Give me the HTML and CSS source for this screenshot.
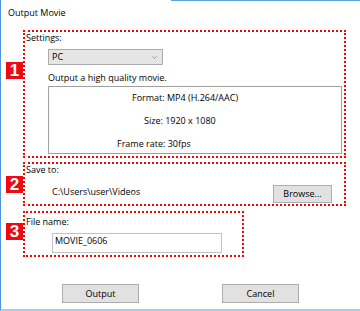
FILE: index.html
```html
<!DOCTYPE html>
<html lang="en">
<head>
    <meta charset="UTF-8">
    <meta name="viewport" content="width=device-width, initial-scale=1.0">
    <title>Output Movie</title>
    <link rel="stylesheet" href="styles.css">
</head>
<body>
    <div class="window">
        <div class="title">Output Movie</div>

        <!-- 1: settings -->
        <div class="group group-settings">
            <span class="badge">1</span>
            <div class="label">Settings:</div>
            <div class="combo">
                <span>PC</span>
                <svg class="chevron" width="5" height="3" viewBox="0 0 5 3"><path d="M0.5 0.5 L2.5 2.5 L4.5 0.5" fill="none" stroke="#8a8a8a" stroke-width="0.9"/></svg>
            </div>
            <div class="desc">Output a high quality movie.</div>
            <div class="info">
                <div class="info-line line-format">Format: MP4 (H.264/AAC)</div>
                <div class="info-line line-size">Size: 1920 x 1080</div>
                <div class="info-line line-rate">Frame rate: 30fps</div>
            </div>
        </div>

        <!-- 2: save location -->
        <div class="group group-save">
            <span class="badge">2</span>
            <div class="label">Save to:</div>
            <div class="save-row">
                <span class="path">C:\Users\user\Videos</span>
                <button class="btn btn-browse">Browse...</button>
            </div>
        </div>

        <!-- 3: file name -->
        <div class="group group-name">
            <span class="badge">3</span>
            <div class="label">File name:</div>
            <div class="textbox">MOVIE_0606</div>
        </div>

        <div class="actions">
            <button class="btn btn-action">Output</button>
            <button class="btn btn-action">Cancel</button>
        </div>
    </div>
</body>
</html>
```

FILE: styles.css
```css
* {
    box-sizing: border-box;
}

body {
    margin: 0;
    background-color: #fff;
    font-family: "Open Sans", "Noto Sans", sans-serif;
    font-size: 9px;
    line-height: 12px;
    color: #000;
}

.window {
    position: relative;
    width: 360px;
    height: 311px;
    border-left: 1px solid #4c95dc;
    border-bottom: 2px solid #a8c9e8;
    overflow: hidden;
}

.window::before {
    content: "";
    position: absolute;
    top: 0;
    left: 170px;
    right: 0;
    height: 1px;
    background-color: #5aa2e2;
}

.title {
    padding: 7px 0 0 7px;
}

.group {
    position: relative;
    margin: 11px 0 0 22px;
    border: 2px dotted #ff0000;
}

.group-settings {
    width: 323px;
    height: 128px;
}

.group-save {
    width: 323px;
    height: 44px;
    margin-top: 4px;
}

.group-name {
    width: 221px;
    height: 46px;
    margin-top: 5px;
}

.badge {
    position: absolute;
    left: -19px;
    width: 17px;
    height: 17px;
    background-color: #ee0a14;
    color: #fff;
    font-family: "Liberation Sans", Arial, sans-serif;
    font-weight: bold;
    font-size: 17px;
    line-height: 17px;
    text-align: center;
}

.group-settings .badge { top: 30px; }
.group-save .badge { top: 12px; }
.group-name .badge { top: 10px; }

.label {
    padding-left: 1px;
}

.group-name .label {
    margin-top: 3px;
}

.combo {
    display: flex;
    align-items: center;
    justify-content: space-between;
    width: 115px;
    height: 16px;
    margin: 5px 0 0 23px;
    padding: 0 5px 0 3px;
    background-color: #e5e5e5;
    border: 1px solid #acacac;
}

.desc {
    margin: 7px 0 0 23px;
}

.info {
    width: 294px;
    height: 68px;
    margin: 2px 0 0 23px;
    padding-top: 5px;
    border: 1px solid #a0a0a0;
    background-color: #fff;
}

.info-line {
    margin-bottom: 11px;
}

.line-format { padding-left: 83px; }
.line-size { padding-left: 95px; }
.line-rate { padding-left: 68px; }

.save-row {
    display: flex;
    align-items: flex-start;
    margin-top: 9px;
}

.path {
    margin: 1px 0 0 27px;
}

.btn {
    height: 18px;
    padding: 0;
    background-color: #e1e1e1;
    border: 1px solid #adadad;
    font-family: "Open Sans", "Noto Sans", sans-serif;
    font-size: 9px;
    line-height: 14px;
    color: #000;
}

.btn-browse {
    width: 59px;
    margin: 0 12px 0 auto;
}

.textbox {
    width: 170px;
    height: 20px;
    margin: 5px 0 0 27px;
    padding: 1px 0 0 2px;
    border: 1px solid #c3c3c3;
}

.actions {
    display: flex;
    gap: 83px;
    margin: 27px 0 0 61px;
}

.btn-action {
    width: 77px;
    height: 19px;
}
```
